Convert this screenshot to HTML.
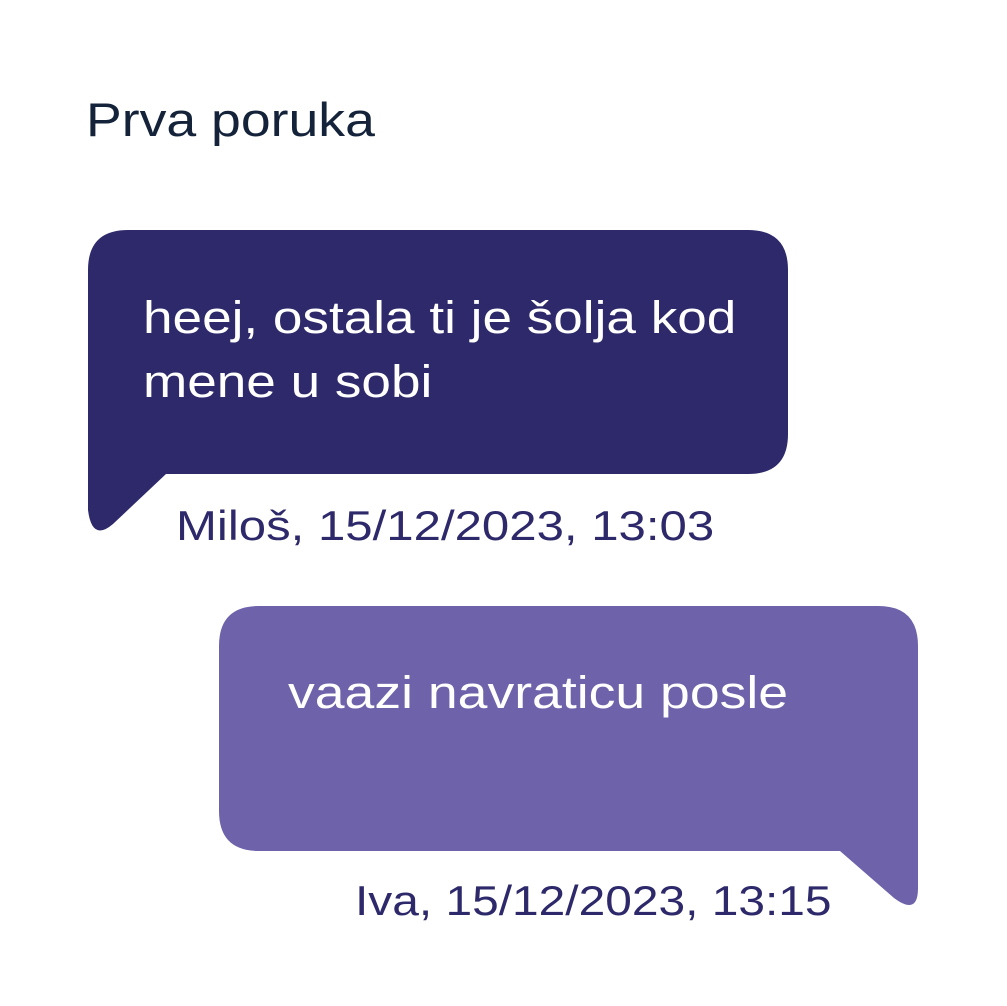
<!DOCTYPE html>
<html><head><meta charset="utf-8"><style>
body{margin:0;width:1007px;height:1006px;background:#fff;position:relative;overflow:hidden;font-family:"Liberation Sans",sans-serif}
.t{position:absolute;white-space:nowrap;line-height:1;transform-origin:0 0}
</style></head><body>
<svg width="1007" height="1006" style="position:absolute;left:0;top:0">
<path d="M128,230 H748 Q788,230 788,270 V434 Q788,474 748,474 H166 L113,524 Q92,542 88,510 V270 Q88,230 128,230 Z" fill="#2d296a"/>
<path d="M259,606 H878 Q918,606 918,646 V888 Q918,916 894,898 L840,851 H259 Q219,851 219,811 V646 Q219,606 259,606 Z" fill="#6e62aa"/>
</svg>
<div class="t" style="left:86px;top:96px;font-size:47px;color:#14233a;transform:scaleX(1.14)">Prva poruka</div>
<div class="t" style="left:143px;font-size:45px;color:#fff;line-height:64px;top:286px;transform:scaleX(1.18)">heej, ostala ti je šolja kod<br>mene u sobi</div>
<div class="t" style="left:176px;top:505px;font-size:42px;color:#2d296a;transform:scaleX(1.17)">Miloš, 15/12/2023, 13:03</div>
<div class="t" style="left:288px;top:670px;font-size:45px;color:#fff;transform:scaleX(1.19)">vaazi navraticu posle</div>
<div class="t" style="left:355px;top:880px;font-size:42px;color:#2d296a;transform:scaleX(1.14)">Iva, 15/12/2023, 13:15</div>
</body></html>
